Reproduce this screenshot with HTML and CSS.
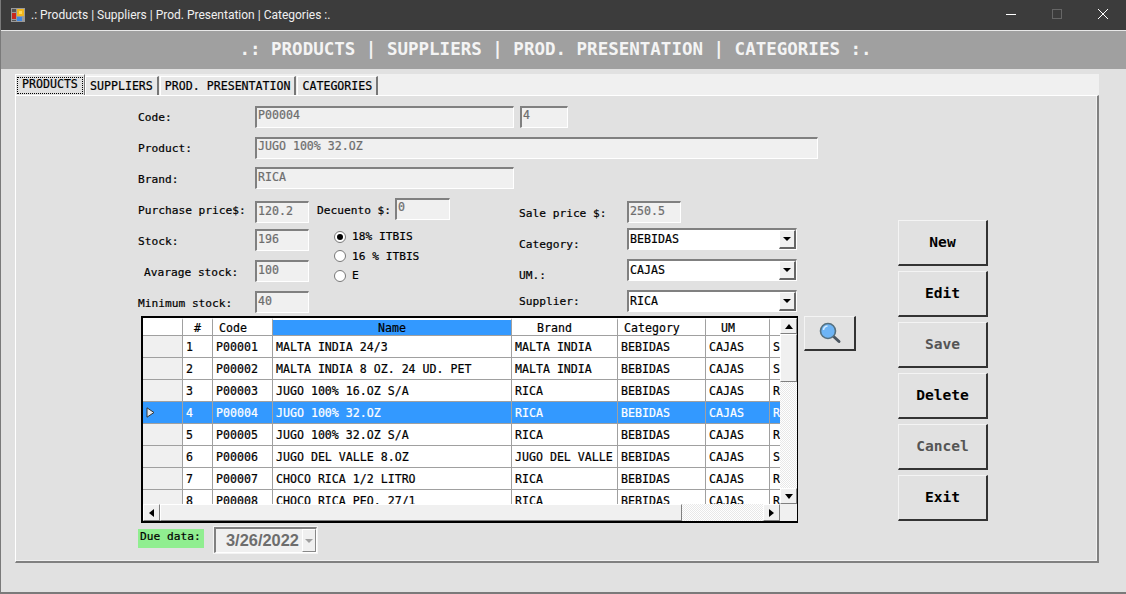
FILE: index.html
```html
<!DOCTYPE html>
<html lang="en">
<head>
    <meta charset="UTF-8">
    <title>.: Products | Suppliers | Prod. Presentation | Categories :.</title>
    <link rel="stylesheet" href="styles.css">
</head>
<body>
    <div class="titlebar">
        <svg class="app-icon" width="14" height="14" viewBox="0 0 14 14">
            <rect x="0" y="0" width="14" height="14" fill="#9a9a9a"/>
            <rect x="1" y="1" width="4" height="3" fill="#555"/>
            <rect x="6" y="1" width="7" height="7" fill="#f2b71c"/>
            <rect x="8" y="3" width="3" height="3" fill="#ffd95a"/>
            <rect x="1" y="5" width="4" height="6" fill="#c8281e"/>
            <rect x="6" y="9" width="5" height="4" fill="#3f86e0"/>
            <rect x="1" y="12" width="4" height="1" fill="#555"/>
        </svg>
        <span class="title-text">.: Products | Suppliers | Prod. Presentation | Categories :.</span>
        <div class="win-buttons">
            <svg width="46" height="30" viewBox="0 0 46 30"><path d="M18 14.5h10" stroke="#fff"/></svg>
            <svg width="46" height="30" viewBox="0 0 46 30"><rect x="18.5" y="9.5" width="9" height="9" fill="none" stroke="#666"/></svg>
            <svg width="46" height="30" viewBox="0 0 46 30"><path d="M18 9l10 10M28 9l-10 10" stroke="#fff" fill="none"/></svg>
        </div>
    </div>

    <div class="banner">.: PRODUCTS | SUPPLIERS | PROD. PRESENTATION | CATEGORIES :.</div>

    <div class="tabs">
        <div class="tab tab-active"><span>PRODUCTS</span></div>
        <div class="tab">SUPPLIERS</div>
        <div class="tab">PROD. PRESENTATION</div>
        <div class="tab">CATEGORIES</div>
    </div>

    <div class="panel">
        <div class="form-area">
            <div class="row row-code">
                <label class="lbl">Code:</label>
                <div class="field f-code">P00004</div>
                <div class="field f-id">4</div>
            </div>
            <div class="row row-product">
                <label class="lbl">Product:</label>
                <div class="field f-product">JUGO 100% 32.OZ</div>
            </div>
            <div class="row row-brand">
                <label class="lbl">Brand:</label>
                <div class="field f-code">RICA</div>
            </div>

            <div class="columns">
                <div class="col col-left">
                    <div class="row">
                        <label class="lbl">Purchase price$:</label>
                        <div class="field f-num">120.2</div>
                    </div>
                    <div class="row">
                        <label class="lbl">Stock:</label>
                        <div class="field f-num">196</div>
                    </div>
                    <div class="row">
                        <label class="lbl lbl-indent">Avarage stock:</label>
                        <div class="field f-num">100</div>
                    </div>
                    <div class="row">
                        <label class="lbl">Minimum stock:</label>
                        <div class="field f-num">40</div>
                    </div>
                </div>
                <div class="col col-mid">
                    <div class="row-discount">
                        <label>Decuento $:</label>
                        <div class="field f-num">0</div>
                    </div>
                    <div class="radios">
                        <div class="radio radio-on"><i></i>18% ITBIS</div>
                        <div class="radio"><i></i>16 % ITBIS</div>
                        <div class="radio"><i></i>E</div>
                    </div>
                </div>
                <div class="col col-right">
                    <div class="row">
                        <label class="lbl-r">Sale price $:</label>
                        <div class="field f-num">250.5</div>
                    </div>
                    <div class="row row-select">
                        <label class="lbl-r">Category:</label>
                        <div class="select">BEBIDAS<b></b></div>
                    </div>
                    <div class="row row-select">
                        <label class="lbl-r">UM.:</label>
                        <div class="select">CAJAS<b></b></div>
                    </div>
                    <div class="row row-select">
                        <label class="lbl-r">Supplier:</label>
                        <div class="select">RICA<b></b></div>
                    </div>
                </div>
            </div>

            <div class="grid-row">
                <div class="grid">
                    <div class="grid-main">
                        <div class="grid-view">
                            <table>
                                <colgroup>
                                    <col class="c-head"><col class="c-n"><col class="c-code"><col class="c-name"><col class="c-brand"><col class="c-cat"><col class="c-um"><col class="c-sup">
                                </colgroup>
                                <thead>
                                    <tr><th class="corner"></th><th>#</th><th class="th-code">Code</th><th class="th-sel">Name</th><th class="th-brand">Brand</th><th class="th-code">Category</th><th class="th-um">UM</th><th></th></tr>
                                </thead>
                                <tbody>
                                    <tr><td class="rh"></td><td>1</td><td>P00001</td><td>MALTA INDIA 24/3</td><td>MALTA INDIA</td><td>BEBIDAS</td><td>CAJAS</td><td>S</td></tr>
                                    <tr><td class="rh"></td><td>2</td><td>P00002</td><td>MALTA INDIA 8 OZ. 24 UD. PET</td><td>MALTA INDIA</td><td>BEBIDAS</td><td>CAJAS</td><td>S</td></tr>
                                    <tr><td class="rh"></td><td>3</td><td>P00003</td><td>JUGO 100% 16.OZ S/A</td><td>RICA</td><td>BEBIDAS</td><td>CAJAS</td><td>R</td></tr>
                                    <tr class="sel"><td class="rh"><svg class="row-arrow" width="9" height="11" viewBox="0 0 9 11"><path d="M1 .8v9.4L8 5.500z" fill="#dfe6ee" stroke="#333"/></svg></td><td>4</td><td>P00004</td><td>JUGO 100% 32.OZ</td><td>RICA</td><td>BEBIDAS</td><td>CAJAS</td><td>R</td></tr>
                                    <tr><td class="rh"></td><td>5</td><td>P00005</td><td>JUGO 100% 32.OZ S/A</td><td>RICA</td><td>BEBIDAS</td><td>CAJAS</td><td>R</td></tr>
                                    <tr><td class="rh"></td><td>6</td><td>P00006</td><td>JUGO DEL VALLE 8.OZ</td><td>JUGO DEL VALLE</td><td>BEBIDAS</td><td>CAJAS</td><td>S</td></tr>
                                    <tr><td class="rh"></td><td>7</td><td>P00007</td><td>CHOCO RICA 1/2 LITRO</td><td>RICA</td><td>BEBIDAS</td><td>CAJAS</td><td>R</td></tr>
                                    <tr><td class="rh"></td><td>8</td><td>P00008</td><td>CHOCO RICA PEO. 27/1</td><td>RICA</td><td>BEBIDAS</td><td>CAJAS</td><td>R</td></tr>
                                </tbody>
                            </table>
                        </div>
                        <div class="vscroll">
                            <div class="sb-btn sb-v"><svg width="8" height="5" viewBox="0 0 8 5"><path d="M4 0l4 5H0z"/></svg></div>
                            <div class="thumb-v"></div>
                            <div class="track"></div>
                            <div class="sb-btn sb-v"><svg width="8" height="5" viewBox="0 0 8 5"><path d="M0 0h8L4 5z"/></svg></div>
                        </div>
                    </div>
                    <div class="hscroll">
                        <div class="sb-btn sb-h"><svg width="5" height="8" viewBox="0 0 5 8"><path d="M5 0v8L0 4z"/></svg></div>
                        <div class="thumb-h"></div>
                        <div class="track"></div>
                        <div class="sb-btn sb-h"><svg width="5" height="8" viewBox="0 0 5 8"><path d="M0 0l5 4-5 4z"/></svg></div>
                        <div class="sb-corner"></div>
                    </div>
                </div>
                <div class="search-btn">
                    <svg width="24" height="24" viewBox="0 0 24 24">
                        <path d="M14.500 14.500l6.500 6" stroke="#4a5560" stroke-width="3" stroke-linecap="round"/>
                        <circle cx="10" cy="10" r="7.500" fill="#6db4f5" stroke="#55707f" stroke-width="1.600"/>
                        <path d="M5.500 9a4.500 4.500 0 0 1 4-4" fill="none" stroke="#d5ecff" stroke-width="1.500"/>
                    </svg>
                </div>
            </div>

            <div class="due-row">
                <div class="due-label">Due data:</div>
                <div class="date-box">
                    <span>3/26/2022</span>
                    <b><svg width="8" height="4" viewBox="0 0 8 4"><path d="M0 0h8L4 4z" fill="#a0a0a0"/></svg></b>
                </div>
            </div>
        </div>

        <div class="actions">
            <div class="btn">New</div>
            <div class="btn">Edit</div>
            <div class="btn btn-off">Save</div>
            <div class="btn">Delete</div>
            <div class="btn btn-off">Cancel</div>
            <div class="btn">Exit</div>
        </div>
    </div>
    <div class="bottom-line"></div>
</body>
</html>
```

FILE: styles.css
```css
* {
    box-sizing: border-box;
}
html, body {
    margin: 0;
    height: 594px;
    overflow: hidden;
}
body {
    width: 1126px;
    background-color: #e1e1e1;
    font-family: "DejaVu Sans Mono", "Liberation Mono", monospace;
    font-size: 11.6px;
    color: #000;
    border-left: 1px solid #7a7a7a;
    position: relative;
    -webkit-text-stroke: 0.2px;
}
.titlebar {
    height: 30px;
    margin-left: -1px;
    background-color: #3c3c3c;
    color: #f0f0f0;
    display: flex;
    align-items: center;
    padding-left: 11px;
    font-family: Roboto, "Noto Sans", sans-serif;
    font-size: 12px;
    -webkit-text-stroke: 0;
}
.app-icon {
    margin-right: 6px;
}
.title-text {
    margin-top: -1px;
}
.win-buttons {
    margin-left: auto;
    display: flex;
}
.win-buttons svg {
    display: block;
}
.banner {
    height: 39px;
    border-top: 1px solid #e8e8e8;
    background-color: #a0a0a0;
    color: #f4f4f4;
    font-size: 17.5px;
    font-weight: bold;
    text-align: center;
    line-height: 37px;
    padding-right: 16px;
    -webkit-text-stroke: 0;
}
.tabs {
    margin: 5px 0 0 14px;
    width: 1084px;
    height: 21px;
    background-color: #f0f0f0;
    display: flex;
    align-items: flex-end;
}
.tab {
    height: 19px;
    padding: 0 4px;
    line-height: 19px;
    background-color: #e8e8e8;
    border-top: 1px solid #fff;
    border-left: 1px solid #fff;
    border-right: 2px solid #777;
    margin-left: 1px;
}
.tab:nth-child(2) {
    margin-left: 0;
}
.tab-active {
    height: 21px;
    width: 70px;
    margin-left: 0;
    padding: 2px 1px 0 1px;
    background-color: #e1e1e1;
    border-right: 1px solid #777;
}
.tab-active span {
    display: block;
    border: 1px dotted #000;
    padding: 0 4px;
    height: 17px;
    line-height: 13px;
    white-space: nowrap;
}
.panel {
    margin-left: 14px;
    width: 1084px;
    height: 468px;
    border-top: 1px solid #fff;
    border-left: 1px solid #fff;
    border-right: 2px solid #808080;
    border-bottom: 2px solid #808080;
    box-shadow: inset -1px -1px 0 #f0f0f0;
    display: flex;
    padding: 10px 0 0 122px;
}
.form-area {
    width: 760px;
}
.actions {
    margin-top: 114px;
    display: flex;
    flex-direction: column;
    gap: 5px;
}
.btn {
    width: 90px;
    height: 46px;
    background-color: #e1e1e1;
    border-top: 1px solid #f4f4f4;
    border-left: 1px solid #f4f4f4;
    border-right: 2px solid #333;
    border-bottom: 2px solid #333;
    font-size: 14.6px;
    font-weight: bold;
    text-align: center;
    line-height: 42px;
    -webkit-text-stroke: 0;
}
.btn-off {
    color: #555;
}
.row {
    display: flex;
    align-items: flex-start;
    height: 22px;
}
.lbl {
    width: 117px;
    flex: none;
    font-size: 11.2px;
    line-height: 14px;
    padding-top: 5px;
}
.lbl-indent {
    padding-left: 6px;
}
.field {
    height: 22px;
    border-top: 2px solid #808080;
    border-left: 2px solid #808080;
    border-right: 1px solid #fff;
    border-bottom: 1px solid #fff;
    background-color: #f0f0f0;
    color: #6d6d6d;
    padding-left: 1px;
    line-height: 15px;
    flex: none;
}
.row-product {
    margin-top: 9px;
}
.row-brand {
    margin-top: 8px;
}
.row-brand .lbl {
    padding-top: 6px;
}
.row-brand .field {
    line-height: 17px;
}
.f-code {
    width: 259px;
}
.f-id {
    width: 48px;
    margin-left: 6px;
}
.f-product {
    width: 563px;
}
.f-num {
    width: 54px;
    line-height: 17px;
}
.columns {
    display: flex;
    margin-top: 9px;
    height: 118px;
}
.col-left {
    width: 179px;
    display: flex;
    flex-direction: column;
    gap: 9px;
    padding-top: 3px;
}
.col-left .lbl {
    padding-top: 3px;
}
.col-left .row + .row .field {
    margin-top: -3px;
}
.col-mid {
    width: 202px;
}
.row-discount {
    display: flex;
    align-items: flex-start;
    height: 22px;
}
.row-discount label {
    width: 78px;
    font-size: 11.2px;
    line-height: 14px;
    padding-top: 6px;
}
.row-discount .field {
    width: 55px;
    line-height: 15px;
}
.radios {
    margin: 9px 0 0 17px;
    display: flex;
    flex-direction: column;
    gap: 4px;
    font-size: 11.2px;
}
.radio {
    display: flex;
    align-items: center;
    height: 15.5px;
}
.radio i {
    width: 12px;
    height: 12px;
    border-radius: 50%;
    background-color: #fff;
    border: 1px solid #777;
    margin-right: 6px;
    flex: none;
    position: relative;
}
.radio-on i::after {
    content: "";
    position: absolute;
    left: 2px;
    top: 2px;
    width: 6px;
    height: 6px;
    border-radius: 50%;
    background-color: #000;
}
.col-right {
    padding-top: 3px;
}
.lbl-r {
    width: 108px;
    flex: none;
    font-size: 11.2px;
    line-height: 14px;
    padding-top: 6px;
}
.row-select {
    margin-top: 9px;
}
.row-select .lbl-r {
    padding-top: 10px;
}
.col-right .row:nth-child(2) {
    margin-top: 5px;
}
.col-right .row:nth-child(4) .lbl-r {
    padding-top: 5px;
}
.select {
    width: 170px;
    height: 22px;
    border-top: 2px solid #808080;
    border-left: 2px solid #808080;
    border-right: 1px solid #fff;
    border-bottom: 1px solid #fff;
    background-color: #fff;
    padding-left: 1px;
    line-height: 19px;
    position: relative;
}
.select b {
    position: absolute;
    right: 0;
    top: 0;
    width: 17px;
    height: 19px;
    background-color: #f0f0f0;
    border-top: 1px solid #fff;
    border-left: 1px solid #fff;
    border-right: 2px solid #666;
    border-bottom: 2px solid #666;
}
.select b::after {
    content: "";
    position: absolute;
    left: 3px;
    top: 6px;
    border-left: 4px solid transparent;
    border-right: 4px solid transparent;
    border-top: 4px solid #000;
}
.grid-row {
    display: flex;
    margin: 0 0 0 3px;
    gap: 6px;
    align-items: flex-start;
}
.grid {
    width: 657px;
    height: 207px;
    border-top: 2px solid #000;
    border-left: 2px solid #000;
    border-right: 1px solid #000;
    border-bottom: 2px solid #000;
    background-color: #f0f0f0;
    display: flex;
    flex-direction: column;
}
.grid-main {
    display: flex;
    height: 186px;
}
.grid-view {
    width: 637px;
    height: 186px;
    overflow: hidden;
    background-color: #fff;
}
table {
    border-collapse: separate;
    border-spacing: 0;
    table-layout: fixed;
    width: 680px;
    background-color: #fff;
}
.c-head { width: 40px; }
.c-n { width: 30px; }
.c-code { width: 60px; }
.c-name { width: 239px; }
.c-brand { width: 106px; }
.c-cat { width: 88px; }
.c-um { width: 64px; }
.c-sup { width: 53px; }
th {
    height: 18px;
    font-weight: normal;
    text-align: center;
    padding: 0;
    background-color: #fff;
    border-top: 2px solid #fff;
    border-bottom: 1px solid #a0a0a0;
    border-right: 1px solid #a0a0a0;
}
.th-sel {
    background-color: #3399ff;
}
.th-code {
    text-align: left;
    padding-left: 6px;
}
.th-brand {
    text-align: left;
    padding-left: 25px;
}
.th-um {
    text-align: left;
    padding-left: 15px;
}
td {
    height: 22px;
    padding: 1px 0 0 3px;
    background-color: #fff;
    border-bottom: 1px solid #a0a0a0;
    border-right: 1px solid #a0a0a0;
    white-space: nowrap;
    overflow: hidden;
}
td.rh {
    background-color: #f0f0f0;
    position: relative;
}
.sel td {
    background-color: #3399ff;
    color: #fff;
}
.sel td.rh {
    background-color: #3399ff;
}
.row-arrow {
    position: absolute;
    left: 3px;
    top: 5px;
}
.vscroll {
    width: 17px;
    height: 186px;
    display: flex;
    flex-direction: column;
    background-color: #f0f0f0;
}
.track {
    flex: 1;
    background-color: #f4f4f4;
    background-image: conic-gradient(#fff 25%, #e8e8e8 0 50%, #fff 0 75%, #e8e8e8 0);
    background-size: 2px 2px;
}
.sb-btn {
    background-color: #f0f0f0;
    border-top: 1px solid #fff;
    border-left: 1px solid #fff;
    border-right: 1px solid #808080;
    border-bottom: 1px solid #808080;
    display: flex;
    align-items: center;
    justify-content: center;
    flex: none;
}
.sb-v {
    height: 16px;
}
.sb-h {
    width: 17px;
    height: 17px;
}
.thumb-v {
    height: 48px;
    background-color: #f0f0f0;
    border-top: 1px solid #fff;
    border-left: 1px solid #fff;
    border-right: 1px solid #808080;
    border-bottom: 1px solid #808080;
    flex: none;
}
.hscroll {
    height: 17px;
    display: flex;
}
.thumb-h {
    width: 522px;
    background-color: #f0f0f0;
    border-top: 1px solid #fff;
    border-left: 1px solid #fff;
    border-right: 1px solid #808080;
    border-bottom: 1px solid #808080;
    flex: none;
}
.sb-corner {
    width: 17px;
    flex: none;
    background-color: #f0f0f0;
}
.search-btn {
    width: 52px;
    height: 35px;
    background-color: #e1e1e1;
    border-top: 1px solid #f4f4f4;
    border-left: 1px solid #f4f4f4;
    border-right: 2px solid #333;
    border-bottom: 2px solid #333;
    display: flex;
    align-items: center;
    justify-content: center;
}
.due-row {
    display: flex;
    align-items: flex-start;
    margin-top: 4px;
    gap: 10px;
}
.due-label {
    width: 66px;
    height: 19px;
    margin-top: 2px;
    background-color: #90ee90;
    padding: 0 0 0 2px;
    line-height: 16px;
    font-size: 11.2px;
}
.date-box {
    width: 103px;
    height: 26px;
    border-top: 2px solid #808080;
    border-left: 2px solid #808080;
    border-right: 1px solid #fff;
    border-bottom: 1px solid #fff;
    background-color: #f0f0f0;
    display: flex;
    font-family: "Liberation Sans", Arial, sans-serif;
    font-size: 16.4px;
    font-weight: bold;
    color: #6d6d6d;
    box-shadow: 0 0 0 1px #f4f4f4;
    -webkit-text-stroke: 0;
}
.date-box span {
    padding: 2px 0 0 10px;
    flex: 1;
    white-space: nowrap;
    overflow: hidden;
}
.date-box b {
    width: 14px;
    background-color: #f0f0f0;
    border-top: 1px solid #fff;
    border-left: 1px solid #fff;
    border-right: 1px solid #888;
    border-bottom: 1px solid #888;
    display: flex;
    align-items: center;
    justify-content: center;
    flex: none;
}
.bottom-line {
    position: absolute;
    left: 0;
    top: 592px;
    width: 1126px;
    height: 2px;
    background-color: #7a7a7a;
}
```
